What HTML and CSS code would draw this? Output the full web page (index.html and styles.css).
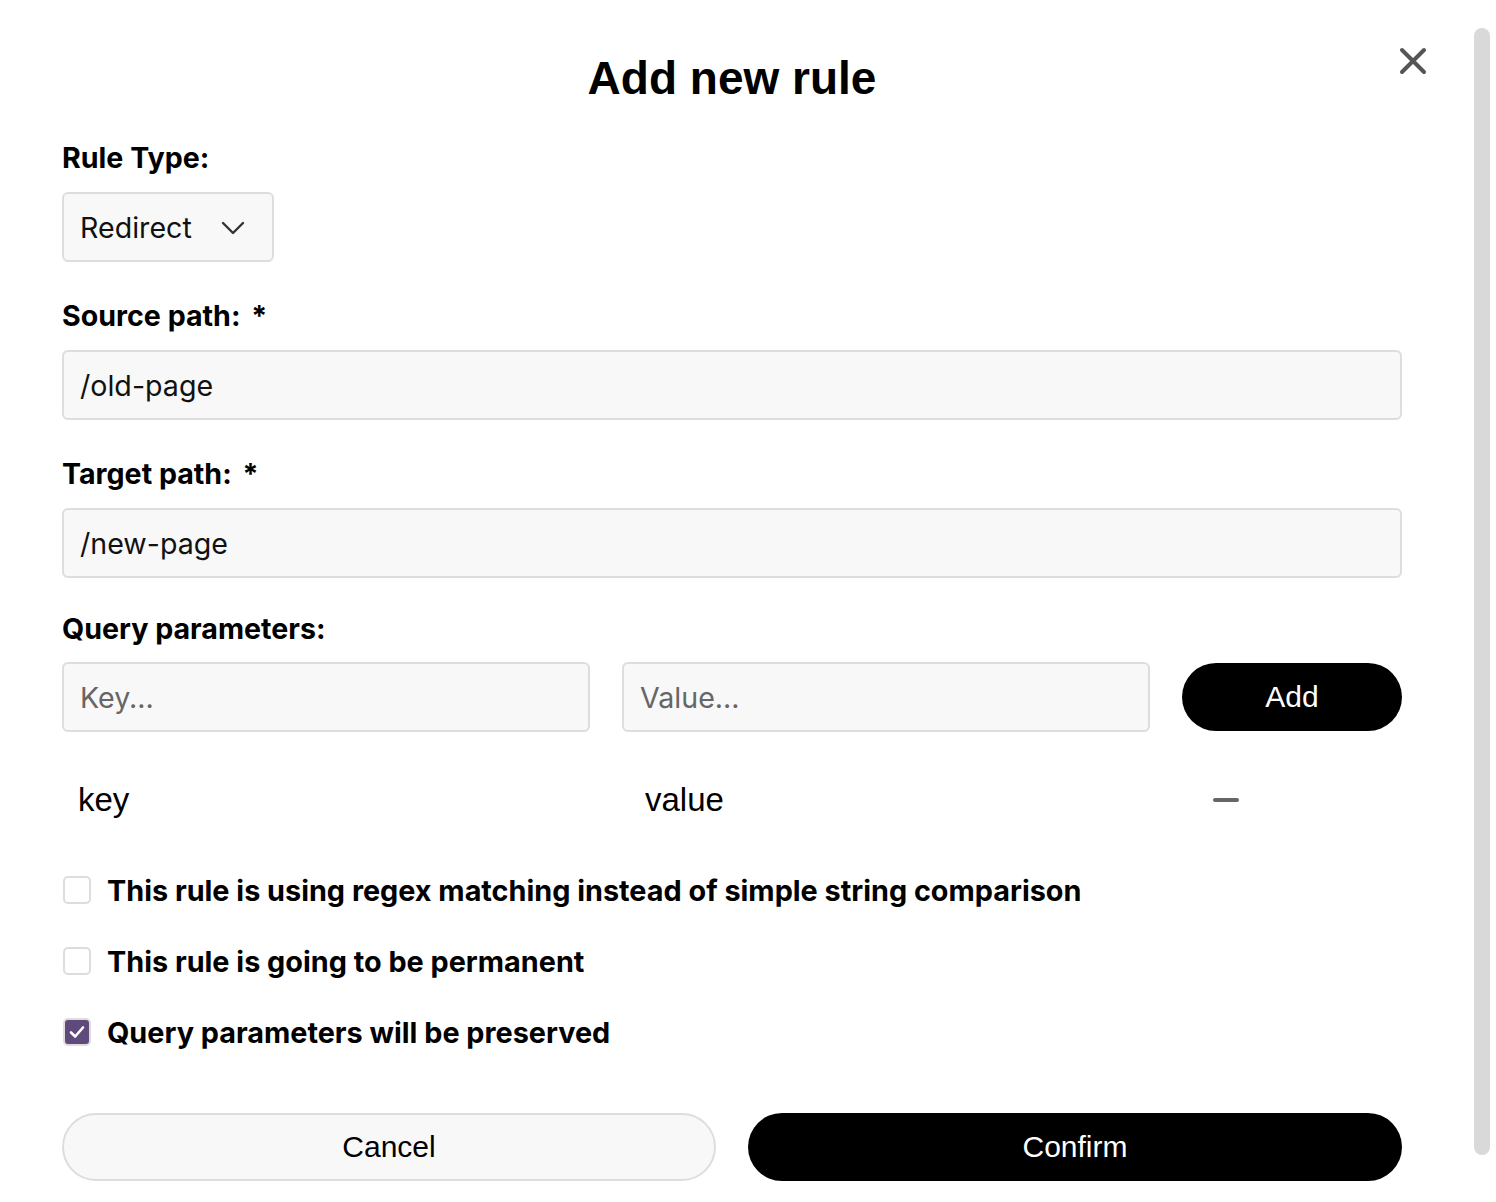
FILE: index.html
```html
<!DOCTYPE html>
<html lang="en">
<head>
<meta charset="utf-8">
<title>Add new rule</title>
<link rel="stylesheet" href="styles.css">
</head>
<body>
<div class="modal">
  <button class="close" aria-label="Close">
    <svg width="28" height="28" viewBox="0 0 28 28"><path d="M3 3 L25 25 M25 3 L3 25" stroke="#555" stroke-width="4" stroke-linecap="round" fill="none"/></svg>
  </button>
  <h1 class="title">Add new rule</h1>

  <div class="field">
    <label class="label">Rule Type:</label>
    <div class="select">
      <span>Redirect</span>
      <svg class="chev" width="24" height="14" viewBox="0 0 24 14"><path d="M2 2 L12 12 L22 2" stroke="#333" stroke-width="2.4" fill="none" stroke-linecap="round" stroke-linejoin="round"/></svg>
    </div>
  </div>

  <div class="field">
    <label class="label">Source path: <span class="req">*</span></label>
    <input class="input" type="text" value="/old-page">
  </div>

  <div class="field target">
    <label class="label">Target path: <span class="req">*</span></label>
    <input class="input" type="text" value="/new-page">
  </div>

  <div class="field query">
    <label class="label">Query parameters:</label>
    <div class="qrow">
      <input class="input" type="text" placeholder="Key...">
      <input class="input" type="text" placeholder="Value...">
      <button class="btn-add">Add</button>
    </div>
  </div>

  <div class="params">
    <span class="pcell">key</span>
    <span class="pcell">value</span>
    <span class="pcell"><span class="minus"></span></span>
  </div>

  <div class="checks">
    <label class="check"><span class="box"></span><span>This rule is using regex matching instead of simple string comparison</span></label>
    <label class="check"><span class="box"></span><span>This rule is going to be permanent</span></label>
    <label class="check"><span class="box checked"><svg width="20" height="20" viewBox="0 0 20 20"><path d="M4 10.5 L8.2 14.5 L16 5.5" stroke="#fff" stroke-width="2.6" fill="none" stroke-linecap="round" stroke-linejoin="round"/></svg></span><span>Query parameters will be preserved</span></label>
  </div>

  <div class="actions">
    <button class="btn btn-cancel">Cancel</button>
    <button class="btn btn-confirm">Confirm</button>
  </div>
</div>
<div class="scrollbar"></div>
</body>
</html>
```

FILE: styles.css
```css
* { box-sizing: border-box; }
html, body { margin: 0; padding: 0; background: #fff; }
body {
  font-family: Inter, "Noto Sans", sans-serif;
  color: #000;
  height: 1202px;
  overflow: hidden;
  position: relative;
}
.modal {
  position: relative;
  width: 1340px;
  margin-left: 62px;
  padding-top: 48px;
}
.close {
  position: absolute;
  top: 47px;
  right: -25px;
  background: none;
  border: 0;
  padding: 0;
  width: 28px;
  height: 28px;
  cursor: pointer;
}
.title {
  margin: 0 0 34px;
  text-align: center;
  font-family: "Liberation Sans", Arial, sans-serif;
  font-weight: 700;
  font-size: 46px;
  line-height: 60px;
}
.field { display: flex; flex-direction: column; margin-bottom: 38px; }
.field.target { margin-bottom: 35px; }
.field.query { margin-bottom: 0; }
.label {
  font-size: 28.6px;
  font-weight: 700;
  line-height: 32px;
  margin-bottom: 18px;
}
.req { margin-left: 4px; }
.select {
  width: 212px;
  height: 70px;
  background: #f8f8f8;
  border: 2px solid #ddd;
  border-radius: 6px;
  display: flex;
  align-items: center;
  justify-content: space-between;
  padding: 0 27px 0 16px;
  font-size: 28.6px;
  color: #111;
}
.chev { margin-top: 2px; }
.input {
  height: 70px;
  width: 100%;
  background: #f8f8f8;
  border: 2px solid #ddd;
  border-radius: 6px;
  padding: 0 16px;
  font-family: Inter, "Noto Sans", sans-serif;
  font-size: 28.6px;
  color: #111;
  outline: none;
}
.input::placeholder { color: #666; }
.query .label { margin-bottom: 17px; }
.qrow {
  display: grid;
  grid-template-columns: 528px 528px 220px;
  column-gap: 32px;
  align-items: center;
}
.btn-add {
  height: 68px;
  border: 0;
  border-radius: 34px;
  background: #000;
  color: #fff;
  font-family: "Liberation Sans", Arial, sans-serif;
  font-size: 30px;
}
.params {
  display: grid;
  grid-template-columns: 567px 568px 1fr;
  height: 70px;
  margin-top: 33px;
  align-items: center;
  font-family: "Liberation Sans", Arial, sans-serif;
  font-size: 33px;
}
.pcell { padding-left: 16px; display: flex; align-items: center; }
.minus {
  display: block;
  width: 26px;
  height: 4px;
  border-radius: 2px;
  background: #666;
}
.checks {
  margin-top: 35px;
  display: flex;
  flex-direction: column;
  gap: 31px;
}
.check {
  display: flex;
  align-items: center;
  gap: 16px;
  height: 40px;
  font-size: 28.8px;
  font-weight: 700;
}
.box {
  width: 28px;
  height: 28px;
  flex: none;
  margin-left: 1px;
  border: 2px solid #ddd;
  border-radius: 5px;
  background: #fff;
  display: flex;
  align-items: center;
  justify-content: center;
}
.box.checked { background: #5f4a7b; border-color: #ddd; }
.actions {
  margin-top: 61px;
  display: grid;
  grid-template-columns: 1fr 1fr;
  column-gap: 32px;
}
.btn {
  height: 68px;
  border-radius: 34px;
  font-family: "Liberation Sans", Arial, sans-serif;
  font-size: 30px;
}
.btn-cancel { background: #f8f8f8; border: 2px solid #ddd; color: #000; }
.btn-confirm { background: #000; border: 0; color: #fff; }
.scrollbar {
  position: absolute;
  left: 1474px;
  top: 28px;
  width: 16px;
  height: 1127px;
  border-radius: 8px;
  background: #d9d9d9;
}
```
